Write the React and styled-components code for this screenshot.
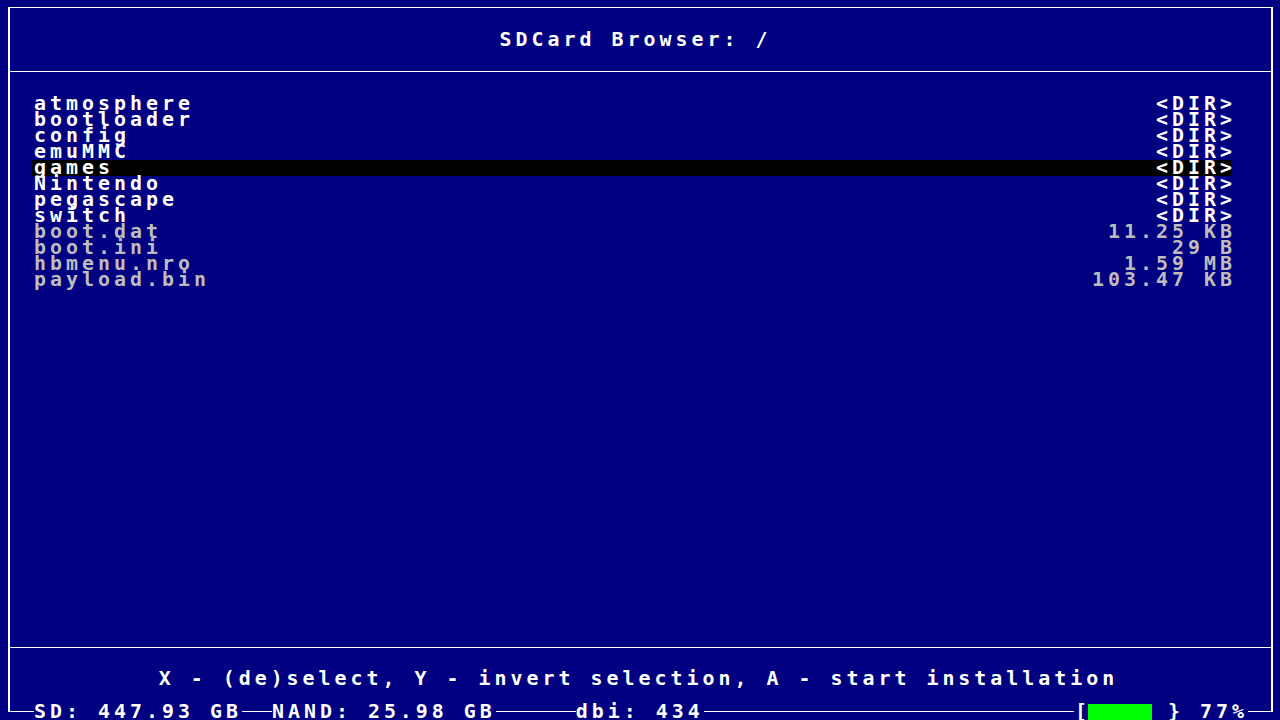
import React from "react";
import styled, { createGlobalStyle } from "styled-components";

// Page reset: navy text-mode screen
const GlobalStyle = createGlobalStyle`
  html, body {
    margin: 0;
    padding: 0;
    background: #000080;
  }
  * {
    box-sizing: border-box;
  }
`;

const NAVY = "#000080";
const WHITE = "#ffffff";
const GRAY = "#bdbdbd";

// Shared character-cell text: 16px wide, 16px tall cells
const Screen = styled.div`
  width: 1280px;
  height: 720px;
  padding: 7px 7px 0 8px;
  display: flex;
  flex-direction: column;
  background: ${NAVY};
  color: ${WHITE};
  font-family: "DejaVu Sans Mono", "Liberation Mono", monospace;
  font-weight: bold;
  font-size: 19.93px;
  letter-spacing: 4px;
  line-height: 16px;
  white-space: pre;
  overflow: hidden;
`;

// Outer box drawn with box characters in the original
const Frame = styled.div`
  flex: 1;
  min-height: 0;
  display: flex;
  flex-direction: column;
  border-top: 1px solid ${WHITE};
  border-left: 2px solid ${WHITE};
  border-right: 2px solid ${WHITE};
`;

const Header = styled.header`
  height: 64px;
  padding: 24px 10px 0 0;
  text-align: center;
  border-bottom: 1px solid ${WHITE};
`;

const List = styled.ul`
  flex: 1;
  margin: 0;
  padding: 24px 39px 0 22px;
  list-style: none;
`;

const Row = styled.li`
  height: 16px;
  display: flex;
  justify-content: space-between;
  padding-left: 2px;
  background: ${(props) => (props.$selected ? "#000000" : "transparent")};
  color: ${(props) => (props.$dir || props.$selected ? WHITE : GRAY)};
`;

const Size = styled.span`
  margin-right: -4px;
`;

const Footer = styled.footer`
  height: 57px;
  padding: 23px 4px 0 0;
  text-align: center;
  border-top: 1px solid ${WHITE};
`;

// Bottom edge of the frame, with status fields set into the line
const StatusBar = styled.div`
  height: 16px;
  display: flex;
  align-items: flex-start;
`;

const Rule = styled.span`
  height: 8px;
  flex: ${(props) => (props.$grow ? "1" : "none")};
  width: ${(props) => (props.$width ? `${props.$width}px` : "auto")};
  border-bottom: 1px solid ${WHITE};
  border-left: ${(props) => (props.$corner === "left" ? `2px solid ${WHITE}` : "none")};
  border-right: ${(props) => (props.$corner === "right" ? `2px solid ${WHITE}` : "none")};
`;

const Field = styled.span`
  height: 16px;
  flex: none;
`;

const Bracket = styled.span`
  width: 14px;
  height: 16px;
  flex: none;
  letter-spacing: 0;
  padding-left: 1px;
`;

const Gauge = styled.span`
  width: 64px;
  height: 16px;
  flex: none;
  margin-right: 16px;
  background: #00ff00;
`;

const entries = [
  { name: "atmosphere", size: "<DIR>", dir: true },
  { name: "bootloader", size: "<DIR>", dir: true },
  { name: "config", size: "<DIR>", dir: true },
  { name: "emuMMC", size: "<DIR>", dir: true },
  { name: "games", size: "<DIR>", dir: true, selected: true },
  { name: "Nintendo", size: "<DIR>", dir: true },
  { name: "pegascape", size: "<DIR>", dir: true },
  { name: "switch", size: "<DIR>", dir: true },
  { name: "boot.dat", size: "11.25 KB" },
  { name: "boot.ini", size: "29 B" },
  { name: "hbmenu.nro", size: "1.59 MB" },
  { name: "payload.bin", size: "103.47 KB" },
];

export default function App() {
  return (
    <>
      <GlobalStyle />
      <Screen>
        <Frame>
          <Header>SDCard Browser: /</Header>
          <List>
            {entries.map((entry) => (
              <Row key={entry.name} $dir={entry.dir} $selected={entry.selected}>
                <span>{entry.name}</span>
                <Size>{entry.size}</Size>
              </Row>
            ))}
          </List>
          <Footer>X - (de)select, Y - invert selection, A - start installation</Footer>
        </Frame>
        <StatusBar>
          <Rule $corner="left" $width={26} />
          <Field>SD: 447.93 GB</Field>
          <Rule $width={30} />
          <Field>NAND: 25.98 GB</Field>
          <Rule $width={80} />
          <Field>dbi: 434</Field>
          <Rule $grow />
          <Bracket>[</Bracket>
          <Gauge />
          <Field>{"} 77%"}</Field>
          <Rule $corner="right" $width={25} />
        </StatusBar>
      </Screen>
    </>
  );
}
